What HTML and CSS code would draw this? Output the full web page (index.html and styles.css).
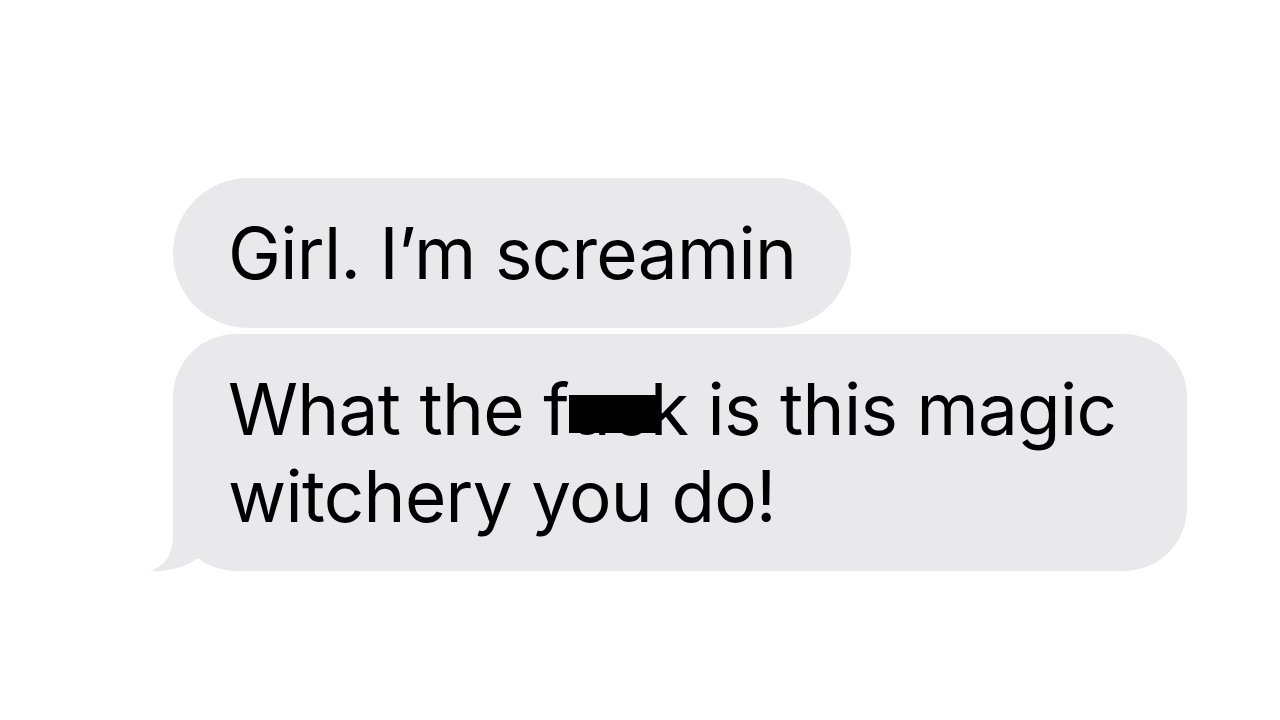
FILE: index.html
```html
<!DOCTYPE html>
<html>
<head>
    <title>Messages</title>
    <link rel="stylesheet" href="styles.css">
</head>
<body>

<div class="thread">
    <div class="bubble">Girl. I’m screamin</div>
    <div class="bubble bubble-wide">
        What the f<span class="redact">uc</span>k is this magic witchery you do!
        <svg class="tail" width="100" height="62" viewBox="0 0 100 62">
            <path d="M23 0 L23 27 C23 48 12 58 0 62 C18 63 38 58 52 46 L60 0 Z" fill="#e9e9eb"/>
        </svg>
    </div>
</div>

</body>
</html>
```

FILE: styles.css
```css
body {
    margin: 0;
    padding: 0;
    background-color: #fff;
    font-family: Inter, "Noto Sans", sans-serif;
}
.thread {
    display: flex;
    flex-direction: column;
    align-items: flex-start;
    gap: 6px;
    padding: 178px 0 0 173px;
}
.bubble {
    position: relative;
    background-color: #e9e9eb;
    color: #000;
    font-size: 71px;
    line-height: 87px;
    letter-spacing: -0.7px;
    padding: 32px 55px 31px;
    border-radius: 75px;
}
.bubble-wide {
    box-sizing: border-box;
    width: 1014px;
    border-radius: 63px;
}
.redact {
    position: relative;
}
.redact::after {
    content: "";
    position: absolute;
    left: 0;
    right: -9px;
    top: 29px;
    height: 38px;
    background-color: #000;
}
.tail {
    position: absolute;
    left: -23px;
    bottom: 0;
}
```
